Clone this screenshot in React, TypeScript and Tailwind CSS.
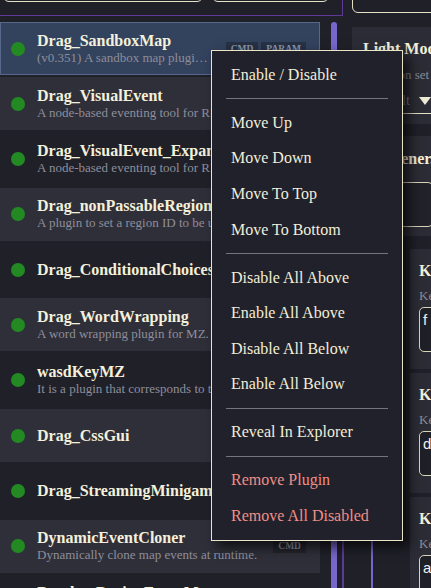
import React from "react";

type Row = { title: string; desc?: string; tags?: string[]; selected?: boolean };

const rows: Row[] = [
  { title: "Drag_SandboxMap", desc: "(v0.351) A sandbox map plugin for RPG Maker MZ.", tags: ["CMD", "PARAM"], selected: true },
  { title: "Drag_VisualEvent", desc: "A node-based eventing tool for RPG Maker MZ." },
  { title: "Drag_VisualEvent_Expansion", desc: "A node-based eventing tool for RPG Maker MZ." },
  { title: "Drag_nonPassableRegion", desc: "A plugin to set a region ID to be unpassable." },
  { title: "Drag_ConditionalChoices" },
  { title: "Drag_WordWrapping", desc: "A word wrapping plugin for MZ." },
  { title: "wasdKeyMZ", desc: "It is a plugin that corresponds to the WASD keys." },
  { title: "Drag_CssGui" },
  { title: "Drag_StreamingMinigame" },
  { title: "DynamicEventCloner", desc: "Dynamically clone map events at runtime.", tags: ["CMD"] },
  { title: "RandomRegionEventManager", desc: "Random events per region." },
];

type MenuEntry = { label: string; danger?: boolean } | "sep";

const menu: MenuEntry[] = [
  { label: "Enable / Disable" },
  "sep",
  { label: "Move Up" },
  { label: "Move Down" },
  { label: "Move To Top" },
  { label: "Move To Bottom" },
  "sep",
  { label: "Disable All Above" },
  { label: "Enable All Above" },
  { label: "Disable All Below" },
  { label: "Enable All Below" },
  "sep",
  { label: "Reveal In Explorer" },
  "sep",
  { label: "Remove Plugin", danger: true },
  { label: "Remove All Disabled", danger: true },
];

function PluginRow({ row, index }: { row: Row; index: number }) {
  const bg = row.selected
    ? "bg-[#33425d] border border-[#56698c] pl-[10px] pr-[13px]"
    : index % 2 === 1
    ? "bg-[#2f2f3a] pl-[11px] pr-[14px]"
    : "pl-[11px] pr-[14px]";
  return (
    <div className={`flex h-[53px] shrink-0 items-center gap-[12px] ${bg}`}>
      <div className="h-[14px] w-[14px] shrink-0 rounded-full bg-[#238a23]" />
      <div className="flex min-w-0 flex-1 flex-col">
        <div className="truncate text-[16px] font-bold leading-[18px] text-[#f4f0da]">{row.title}</div>
        {row.desc && (
          <div className="truncate text-[13px] leading-[16px] text-[#8e8e99]">{row.desc}</div>
        )}
      </div>
      {row.tags && (
        <div className="flex shrink-0 gap-[3px]">
          {row.tags.map((t) => (
            <span
              key={t}
              className="h-[14px] bg-black/25 px-[5px] text-[9.5px] font-bold leading-[14px] text-[#8d94a6]"
            >
              {t}
            </span>
          ))}
        </div>
      )}
    </div>
  );
}

function KeyCard({ title, value }: { title: string; value: string }) {
  return (
    <section className="h-[120px] shrink-0 bg-[#2c2c36] px-[9px] pt-[13px]">
      <div className="whitespace-nowrap text-[16px] font-bold leading-[18px] text-[#f4f0da]">{title}</div>
      <div className="mt-[8px] whitespace-nowrap text-[13px] leading-[16px] text-[#8b8b97]">Keys to bind</div>
      <div className="mt-[3px] h-[45px] w-[120px] rounded-[5px] border border-[#d9d5b8] bg-[#1f1f28] px-[3px] pt-[3px] font-['Liberation_Sans',sans-serif] text-[15px] leading-[17px] text-[#f2f2f2]">
        {value}
      </div>
    </section>
  );
}

export default function App() {
  return (
    <div className="relative flex h-[588px] w-[431px] overflow-hidden bg-[#202029] font-['Liberation_Serif',serif]">
      {/* Left panel */}
      <div className="flex w-[343px] shrink-0 flex-col">
        <div className="flex h-[16px] shrink-0 items-end gap-[9px] overflow-hidden border-r border-b border-[#5e3a98] px-[3px] pb-[13px]">
          <div className="h-[32px] w-[200px] shrink-0 rounded-[6px] border border-[#e6e2c4]" />
          <div className="h-[32px] w-[117px] shrink-0 rounded-[6px] border border-[#e6e2c4]" />
        </div>
        <div className="flex gap-[11px] pt-[6px]">
          <div className="flex w-[320px] shrink-0 flex-col gap-[2.3px]">
            {rows.map((r, i) => (
              <PluginRow key={r.title} row={r} index={i} />
            ))}
          </div>
          <div className="w-[6px] shrink-0">
            <div className="h-[620px] rounded-full bg-[#7866cc]" />
          </div>
        </div>
      </div>

      {/* Right panel */}
      <div className="ml-[9px] flex w-[92px] shrink-0 flex-col">
        <div className="-mt-[18px] h-[31px] shrink-0 rounded-[6px] border border-[#e6e2c4]" />
        <section className="mt-[14px] shrink-0 bg-[#2c2c36] px-[11px] pt-[13px] pb-[10px]">
          <div className="whitespace-nowrap text-[16px] font-bold leading-[18px] text-[#f4f0da]">Light Mode</div>
          <div className="mt-[9px] whitespace-nowrap text-[13px] leading-[16px] text-[#8b8b97]">Selection set for the editor</div>
          <div className="mt-[6px] flex h-[25px] items-center justify-between border-b border-[#e6e2c4] pl-[5px] pr-[2px]">
            <span className="text-[14px] leading-[16px] text-[#7d7d88]">Default</span>
            <svg width="12" height="8" viewBox="0 0 12 8">
              <polygon points="0,0 12,0 6,8" fill="#efebd6" />
            </svg>
          </div>
        </section>
        <section className="mt-[12px] shrink-0 bg-[#2c2c36] px-[11px] pt-[14px] pb-[9px]">
          <div className="whitespace-nowrap text-[16px] font-bold leading-[18px] text-[#f4f0da]">Shortener.</div>
          <div className="mt-[14px] h-[45px] rounded-[5px] border border-[#d9d5b8] bg-[#22222b]" />
        </section>
        <div className="ml-[58px] mt-[13px] flex flex-col gap-[4px]">
          <KeyCard title="Key Up" value="f" />
          <KeyCard title="Key Down" value="d" />
          <KeyCard title="Key Left" value="a" />
        </div>
      </div>

      {/* lower divider lines */}
      <div className="absolute left-[342px] top-[430px] bottom-0 w-[1.5px] bg-[#5e3a98]" />
      <div className="absolute left-[371px] top-[430px] bottom-0 w-[1.5px] bg-[#7866cc]" />

      {/* Context menu */}
      <div className="absolute left-[211px] top-[50px] flex w-[192px] flex-col border border-[#e9e5c6] bg-[#21212b] py-[6px] shadow-[6px_6px_12px_rgba(0,0,0,0.7)]">
        {menu.map((m, i) =>
          m === "sep" ? (
            <div key={i} className="mx-[14px] my-[5.7px] h-px bg-[#75757d]" />
          ) : (
            <div
              key={i}
              className={`flex h-[35.6px] items-center whitespace-nowrap pl-[19px] text-[16px] leading-[18px] ${
                m.danger ? "text-[#ef8f86]" : "text-[#f2eed8]"
              }`}
            >
              {m.label}
            </div>
          )
        )}
      </div>
    </div>
  );
}
